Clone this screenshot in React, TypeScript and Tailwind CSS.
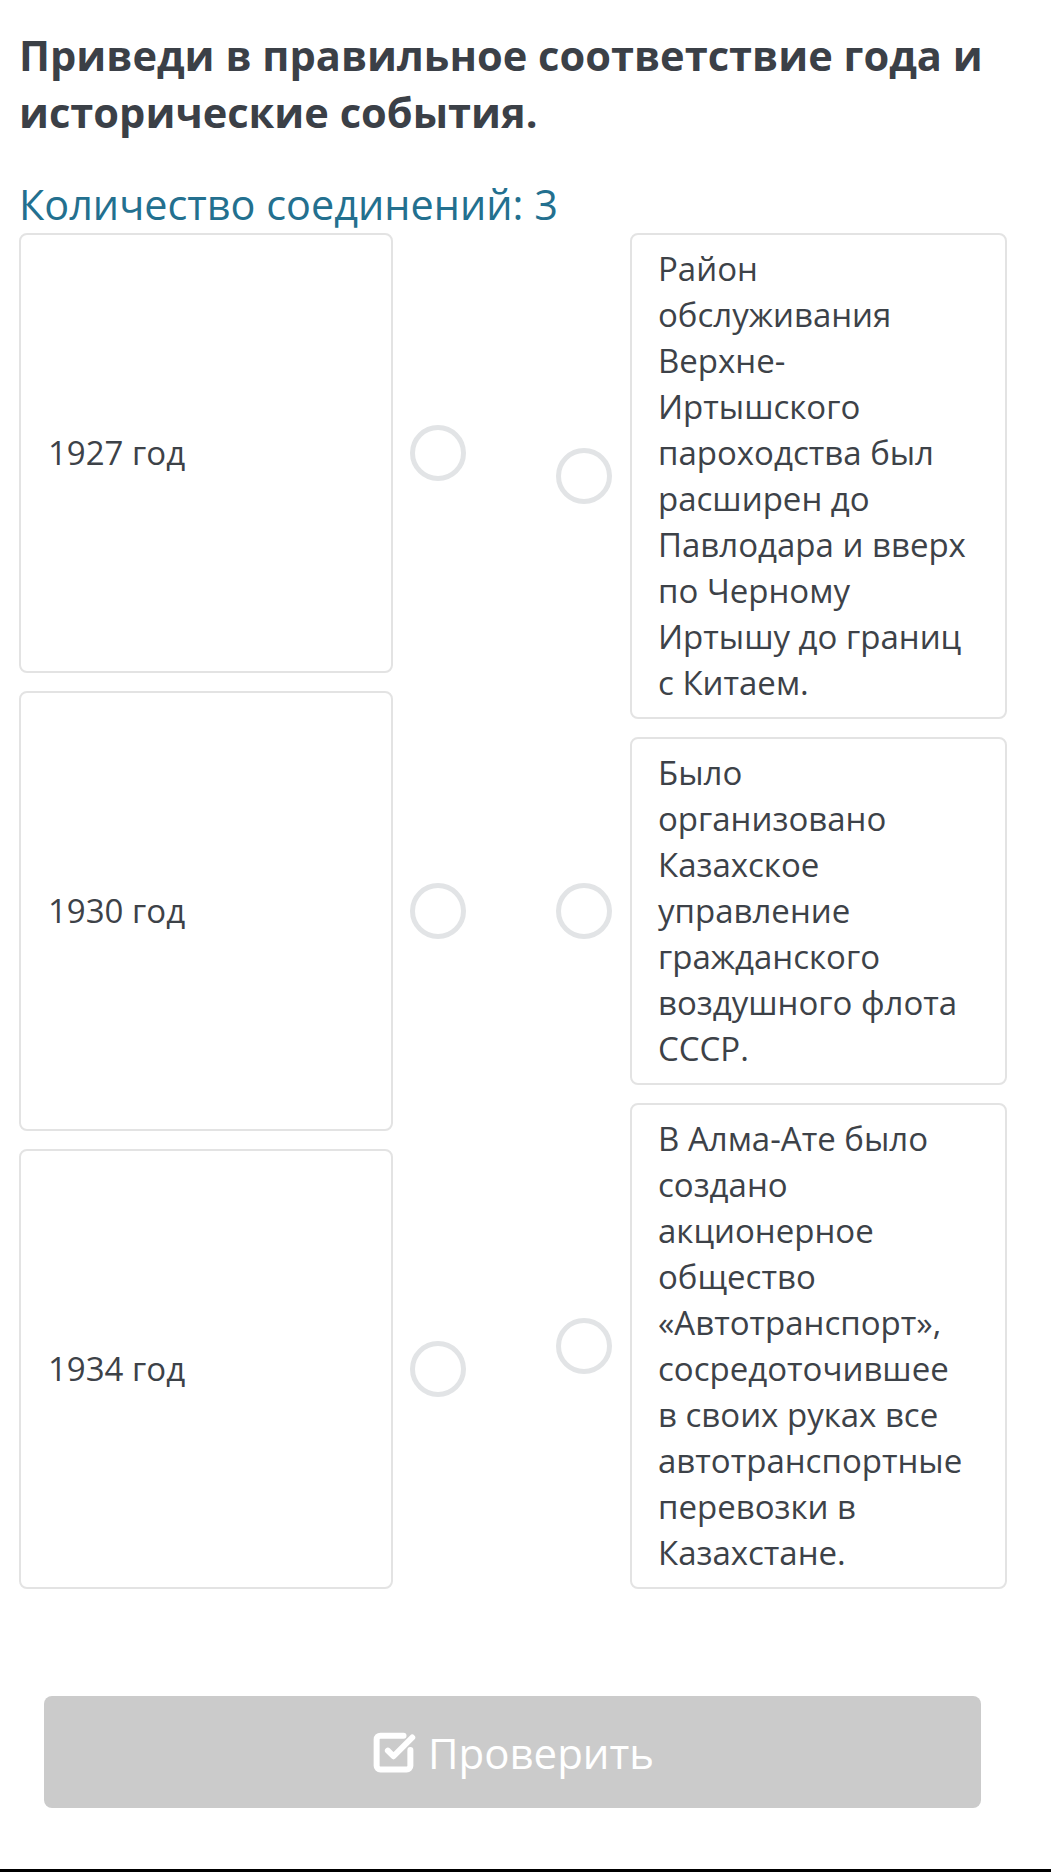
import { SquareCheckBig } from 'lucide-react';

const years = ['1927 год', '1930 год', '1934 год'];

const events = [
  'Район обслуживания Верхне-Иртышского пароходства был расширен до Павлодара и вверх по Черному Иртышу до границ с Китаем.',
  'Было организовано Казахское управление гражданского воздушного флота СССР.',
  'В Алма-Ате было создано акционерное общество «Автотранспорт», сосредоточившее в своих руках все автотранспортные перевозки в Казахстане.',
];

const Dot = () => (
  <div className="w-[56px] h-[56px] shrink-0 rounded-full border-[5px] border-[#e2e4e6] bg-white" />
);

const App = () => {
  return (
    <div className="relative w-full min-h-[1872px] bg-white font-['Open_Sans',sans-serif] text-[#3d4248]">
      <div className="pl-[19px] pr-[45px] pt-[27px]">
        <h1 className="text-[41.6px] leading-[57px] font-bold text-[#3b4047]">
          Приведи в правильное соответствие года и исторические события.
        </h1>

        <div className="mt-[35px] text-[41.4px] leading-[56px] text-[#23708f]">
          Количество соединений: 3
        </div>

        <div className="mt-px flex items-stretch">
          <div className="flex flex-col gap-[18px]">
            {years.map((y) => (
              <div key={y} className="flex-1 flex items-center gap-[17px]">
                <div className="w-[374px] self-stretch flex items-center rounded-lg border-2 border-[#e3e3e3] pl-[27px] text-[33px] leading-[46px]">
                  {y}
                </div>
                <Dot />
              </div>
            ))}
          </div>

          <div className="ml-[90px] flex flex-col gap-[18px]">
            {events.map((e) => (
              <div key={e} className="flex items-center gap-[18px]">
                <Dot />
                <div className="w-[377px] rounded-lg border-2 border-[#e3e3e3] pl-[26px] pr-[34px] py-[11px] text-[33px] leading-[46px]">
                  {e}
                </div>
              </div>
            ))}
          </div>
        </div>

        <div className="mt-[107px] px-[25px]">
          <button className="w-full h-[112px] rounded-lg bg-[#cbcbcb] flex items-center justify-center gap-[12px] text-white text-[42px]">
            <SquareCheckBig size={45} strokeWidth={3.2} />
            <span>Проверить</span>
          </button>
        </div>
      </div>
      <div className="absolute bottom-0 left-0 w-full h-[3px] bg-black" />
    </div>
  );
};

export default App;
